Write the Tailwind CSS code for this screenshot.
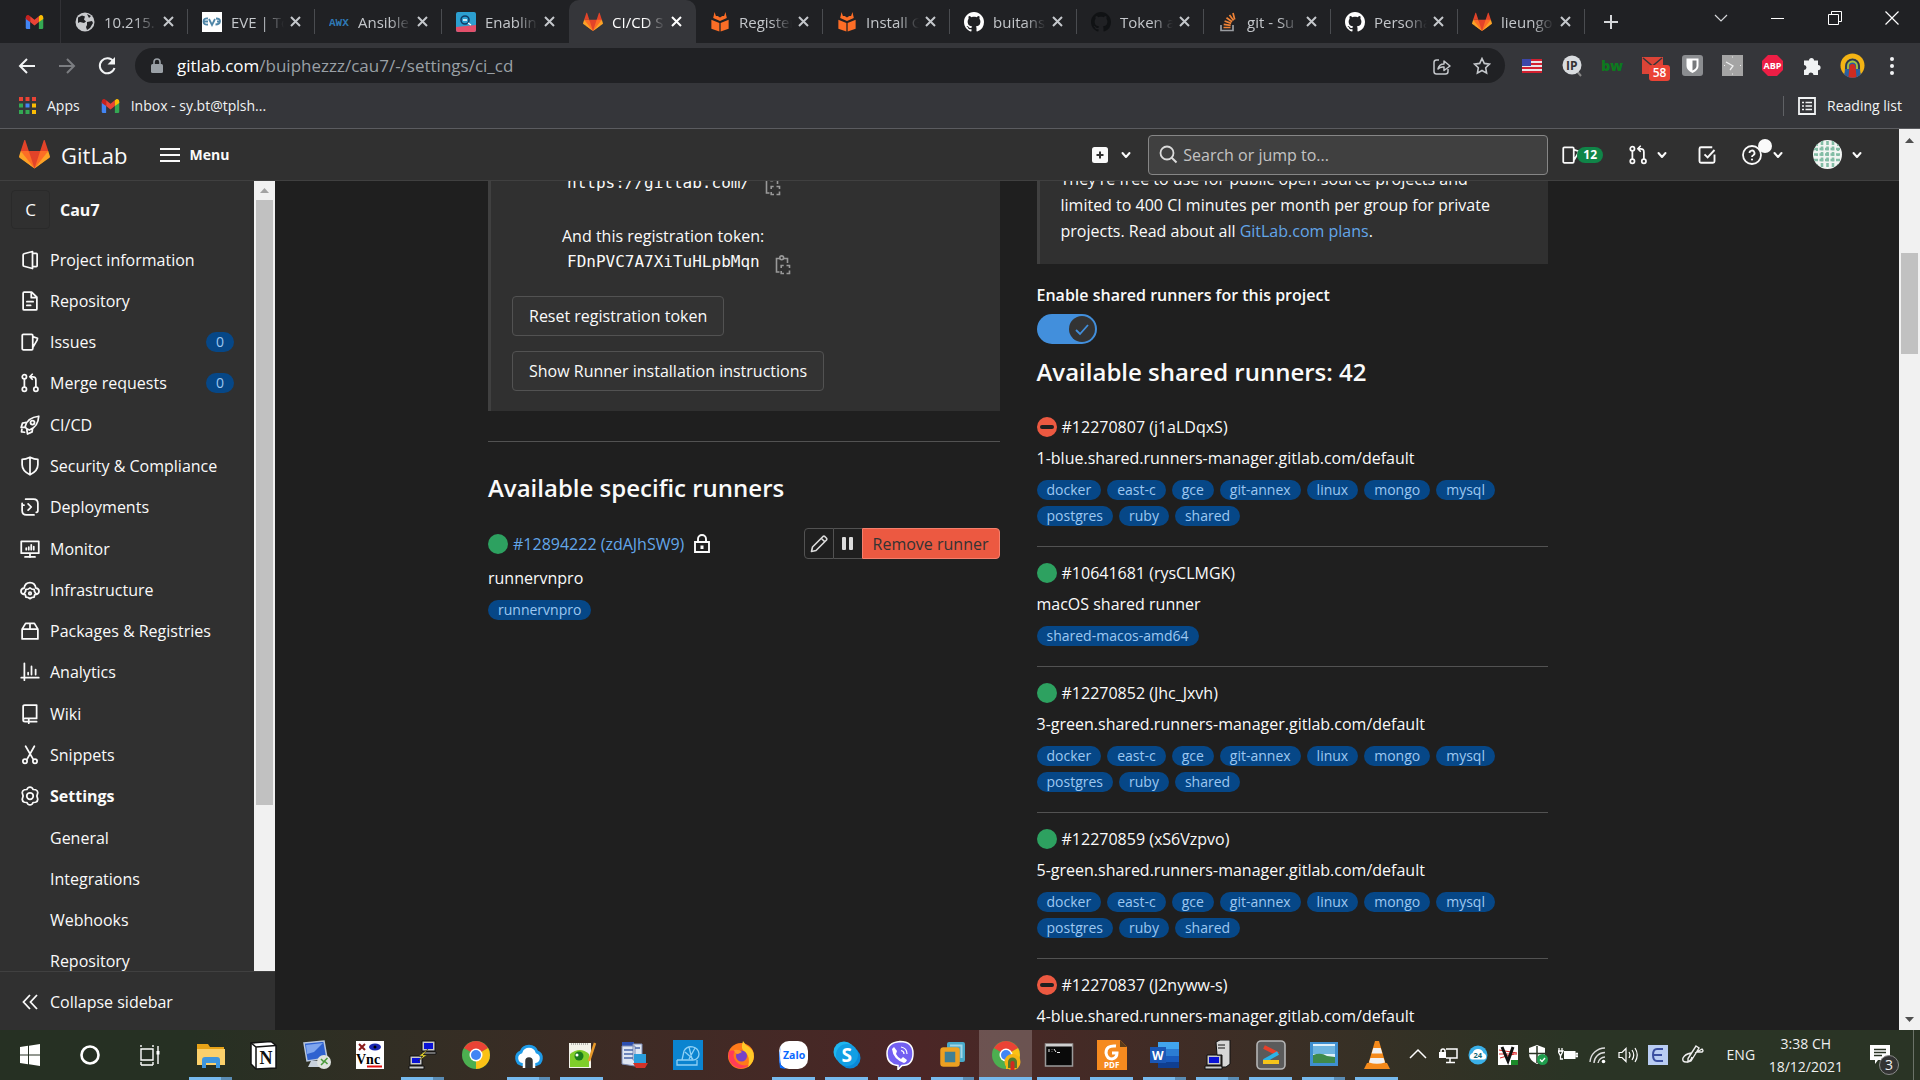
<!DOCTYPE html>
<html lang="en">
<head>
<meta charset="utf-8">
<title>CI/CD Settings · Cau7 · GitLab</title>
<script src="https://cdn.jsdelivr.net/npm/@tailwindcss/browser@4"></script>
</head>
<body class="flex h-screen flex-col overflow-hidden bg-[#1f1f1f] font-['Open_Sans','Noto_Sans',sans-serif] text-[16px] leading-[26px] text-[#fafafa]">

<svg class="hidden" aria-hidden="true">
  <symbol id="tanuki" viewBox="0 0 36 36"><path fill="#e24329" d="M2 14l9.38 9v-9l-4-12.28c-.205-.632-1.176-.632-1.38 0zM34 14l-9.38 9v-9l4-12.28c.205-.632 1.176-.632 1.38 0zM18 34.38L3 14h30z"/><path fill="#fc6d26" d="M18 34.38L11.38 14H2l4 11zM18 34.38L24.62 14H34l-4 11z"/><path fill="#fca326" d="M2 14L.1 20.16c-.18.565 0 1.2.5 1.56L18 34.38zM34 14l1.9 6.16c.18.565 0 1.2-.5 1.56L18 34.38z"/></symbol>
  <symbol id="github" viewBox="0 0 16 16"><path fill="currentColor" d="M8 0C3.58 0 0 3.58 0 8c0 3.54 2.29 6.53 5.47 7.59.4.07.55-.17.55-.38 0-.19-.01-.82-.01-1.49-2.01.37-2.53-.49-2.69-.94-.09-.23-.48-.94-.82-1.13-.28-.15-.68-.52-.01-.53.63-.01 1.08.58 1.23.82.72 1.21 1.87.87 2.33.66.07-.52.28-.87.51-1.07-1.78-.2-3.64-.89-3.64-3.95 0-.87.31-1.59.82-2.15-.08-.2-.36-1.02.08-2.12 0 0 .67-.21 2.2.82.64-.18 1.32-.27 2-.27s1.36.09 2 .27c1.53-1.04 2.2-.82 2.2-.82.44 1.1.16 1.92.08 2.12.51.56.82 1.27.82 2.15 0 3.07-1.87 3.75-3.65 3.95.29.25.54.73.54 1.48 0 1.07-.01 1.93-.01 2.2 0 .21.15.46.55.38A8.01 8.01 0 0 0 16 8c0-4.42-3.58-8-8-8z"/></symbol>
  <symbol id="gmail" viewBox="0 0 20 16"><path fill="#4285f4" d="M0 3v11.500Q0 16 1.500 16H5V7z"/><path fill="#34a853" d="M20 3v11.500Q20 16 18.500 16H15V7z"/><path fill="#ea4335" d="M5 1.500V8l5 4 5-4V1.500L10 5.500z"/><path fill="#c5221f" d="M0 3v1.500L5 8V1.500L3.500.4C2-.6 0 .6 0 3z"/><path fill="#fbbc04" d="M20 3v1.500L15 8V1.500l1.500-1.100C18-.6 20 .6 20 3z"/></symbol>
  <symbol id="docs" viewBox="0 0 20 22"><path fill="#fc6d26" d="M4 0l1.500 4.500h2L10 6l2.500-1.500h2L16 0l1.500 6.500L10 10 2.500 6.500zM.500 8.500L9.300 12v9.500L.500 18.500zM19.500 8.500L10.700 12v9.500l8.800-3z"/></symbol>
  <symbol id="globe" viewBox="0 0 20 20"><circle cx="10" cy="10" r="9.500" fill="#c8cacd"/><path fill="#202124" d="M3 5.500l4-2 3 1-1 3 2 2-2 1.500-4-1-2 1zM12 10l5-1 1 2-3 5-3 2-1-3 1-2zM12 2l4 2-2 2z"/></symbol>
  <symbol id="eve" viewBox="0 0 20 20"><path fill="#fff" d="M0 0h20v20H0z"/><path d="M6 6.500Q1.500 6 1.500 9.500T6 12.500M2 9.500h4M7 7l3 6 3-6M14 6.500q4.500 0 4 3t-4.500 3M15 9.500h3" fill="none" stroke="#4f86a8" stroke-width="1.800"/></symbol>
  <symbol id="awx" viewBox="0 0 20 20"><text x="0" y="14" font-family="Liberation Mono" font-weight="bold" font-size="11" fill="#2f79b5">AWX</text></symbol>
  <symbol id="enabling" viewBox="0 0 20 20"><rect width="20" height="20" rx="2" fill="#2c9fd0"/><path fill="#e2506b" d="M0 15l20-2v5q0 2-2 2H2q-2 0-2-2z"/><circle cx="9" cy="8" r="4" fill="none" stroke="#103c66" stroke-width="1.600"/><path d="M7 8h4M12 11l3 2" stroke="#fff" stroke-width="1.400"/></symbol>
  <symbol id="stack" viewBox="0 0 20 20"><path d="M3 13v5.500h12V13" fill="none" stroke="#9a9da1" stroke-width="1.700"/><path d="M5.500 15.500h7M5.700 12.300l7 1M6.600 9l6.600 2.400M8.500 5.800l5.600 4M11.500 3l4 5.500M15 1l1.700 6.500" stroke="#ef8236" stroke-width="1.700"/></symbol>
  <symbol id="chev" viewBox="0 0 12 12"><path d="M2.500 4l3.500 4 3.500-4" fill="none" stroke="currentColor" stroke-width="2" stroke-linecap="round" stroke-linejoin="round"/></symbol>
  <symbol id="issues" viewBox="0 0 16 16"><path d="M2.700 1.800h6.600q.9 0 .9.900v10.600q0 .9-.9.900H2.700q-.9 0-.9-.900V2.700q0-.900.900-.900zM10.200 3.700l3.800 1.300-.3 1.500-3.500 6" fill="none" stroke="currentColor" stroke-width="1.400" stroke-linejoin="round"/></symbol>
  <symbol id="merge" viewBox="0 0 16 16"><g fill="none" stroke="currentColor" stroke-width="1.400" stroke-linecap="round" stroke-linejoin="round"><circle cx="3.500" cy="3" r="1.700"/><circle cx="3.500" cy="13" r="1.700"/><circle cx="12.700" cy="13" r="1.700"/><path d="M3.500 5v6M12.700 11V5.500q0-2.500-2.500-2.500H8M9.800 1L7.800 3l2 2"/></g></symbol>
  <symbol id="copy" viewBox="0 0 16 20"><g fill="none" stroke="currentColor" stroke-width="1.600"><path d="M4.500 17H1.500V3.500H5M8.500 3.500H12.500V8"/><circle cx="6.700" cy="2.800" r="1.900"/><path d="M6.200 13v-2.500h2.500M11.500 10.500H14.500V13M14.500 15.500v3h-3M9 18.500H6.200V16"/></g></symbol>
</svg>

<!-- Browser chrome -->
<header class="shrink-0 bg-[#35363a] text-[15px]">
  <div class="flex h-[43px] bg-[#202124] text-[#c4c7cb]">
    <div class="flex w-[61px] items-center justify-end border-r border-[#4a4c50]/40 pr-[16px]"><svg class="h-[14px] w-[19px]" role="img" aria-label="Gmail"><use href="#gmail"/></svg></div>
    <div id="tabs" class="flex"></div>
    <button class="ml-[18px] w-[24px]" aria-label="New tab"><svg class="h-[16px] w-[16px]" viewBox="0 0 16 16"><path d="M8 1v14M1 8h14" stroke="#d5d7da" stroke-width="2"/></svg></button>
    <div class="ml-auto flex pb-[7px]">
      <button class="flex w-[57px] items-center justify-center" aria-label="Search tabs"><svg class="h-[14px] w-[14px]" viewBox="0 0 14 14"><path d="M1 4l6 6 6-6" fill="none" stroke="#d5d7da" stroke-width="1.200"/></svg></button>
      <button class="flex w-[57px] items-center justify-center" aria-label="Minimize"><span class="h-px w-[13px] bg-white"></span></button>
      <button class="flex w-[57px] items-center justify-center" aria-label="Restore"><svg class="h-[14px] w-[14px]" viewBox="0 0 14 14"><path d="M.5 3.500h10v10H.5zM3.500 3V.5h10v10H11" fill="none" stroke="#fff"/></svg></button>
      <button class="flex w-[57px] items-center justify-center" aria-label="Close"><svg class="h-[14px] w-[14px]" viewBox="0 0 14 14"><path d="M.5.5l13 13M13.500.5l-13 13" stroke="#fff" stroke-width="1.200"/></svg></button>
    </div>
  </div>
  <div class="flex h-[45px] items-center pr-[8px]">
    <button class="ml-[17px] mr-[20px]" aria-label="Back"><svg class="h-[20px] w-[20px]" viewBox="0 0 20 20"><path d="M18 10H3M10 3l-7 7 7 7" fill="none" stroke="#f1f3f4" stroke-width="2"/></svg></button>
    <button class="mr-[20px]" aria-label="Forward"><svg class="h-[20px] w-[20px]" viewBox="0 0 20 20"><path d="M2 10h15M10 3l7 7-7 7" fill="none" stroke="#7b7d81" stroke-width="2"/></svg></button>
    <button class="mr-[18px]" aria-label="Reload"><svg class="h-[20px] w-[20px]" viewBox="0 0 20 20"><path d="M16.500 5.500A7.500 7.500 0 1 0 17.500 12" fill="none" stroke="#f1f3f4" stroke-width="2"/><path d="M18 1v7.500h-7.500z" fill="#f1f3f4"/></svg></button>
    <div class="flex h-[35px] grow items-center gap-[14px] rounded-full bg-[#202124] pr-[12px] pl-[16px]">
      <svg class="h-[16px] w-[12px] shrink-0" viewBox="0 0 12 16"><rect y="6" width="12" height="9" rx="1.500" fill="#9aa0a6"/><path d="M3 7V4a3 3 0 0 1 6 0v3" fill="none" stroke="#9aa0a6" stroke-width="1.600"/></svg>
      <a href="#" class="grow text-[17px] text-[#9aa0a6]"><span class="text-white">gitlab.com</span>/buiphezzz/cau7/-/settings/ci_cd</a>
      <button class="w-[20px]" aria-label="Share"><svg class="h-[18px] w-[18px]" viewBox="0 0 18 18"><path d="M6 3H3.500Q1 3 1 5.500v9Q1 17 3.500 17h9q2.500 0 2.500-2.500V12M5 12q1-5 6-5V4l6 5-6 4.500V10q-4-.5-6 2z" fill="none" stroke="#c4c7cb" stroke-width="1.500" stroke-linejoin="round"/></svg></button>
      <button class="ml-[6px] w-[20px]" aria-label="Bookmark this page"><svg class="h-[18px] w-[18px]" viewBox="0 0 18 18"><path d="M9 1.500l2.300 4.900 5.200.7-3.800 3.700.9 5.300L9 13.500l-4.600 2.600.9-5.300L1.500 7.100l5.200-.7z" fill="none" stroke="#c4c7cb" stroke-width="1.600"/></svg></button>
    </div>
    <div class="ml-[7px] flex">
      <button class="flex w-[40px] items-center justify-center" aria-label="Flag"><svg class="h-[14px] w-[20px]" viewBox="0 0 20 14"><path fill="#e9e3e6" d="M0 0h20v14H0z"/><path d="M0 1h20M0 5h20M0 9h20M0 13h20" stroke="#d3202f" stroke-width="2"/><path fill="#3c46a8" d="M0 0h9v7H0z"/></svg></button>
      <button class="flex w-[40px] items-center justify-center" aria-label="IP"><svg class="h-[22px] w-[22px]" viewBox="0 0 22 22"><path d="M15 15l5 6" stroke="#888" stroke-width="2"/><circle cx="11" cy="10" r="9.500" fill="#d9dcdf"/><text x="5" y="14.500" font-family="Open Sans" font-size="12" font-weight="bold" fill="#333">IP</text></svg></button>
      <button class="flex w-[40px] items-center justify-center text-[14px] font-extrabold text-[#0c7a1e]">bw</button>
      <button class="relative flex w-[40px] items-center justify-center" aria-label="Mail"><svg class="h-[17px] w-[21px]" viewBox="0 0 21 17"><path fill="#dc4437" d="M0 0h21v17H0z"/><path d="M1 1l9.500 8L20 1" fill="none" stroke="#35363a" stroke-width="1.500"/></svg><span class="absolute top-[12px] left-[17px] h-[16px] w-[21px] rounded-[3px] bg-[#ea4335] text-[12px] leading-[16px] font-semibold text-white">58</span></button>
      <button class="flex w-[40px] items-center justify-center" aria-label="Bitwarden"><svg class="h-[21px] w-[21px]" viewBox="0 0 21 21"><rect width="21" height="21" rx="3" fill="#8b8d90"/><path d="M4.500 3.500h12V11q0 4-6 7-6-3-6-7z" fill="#fff"/><path d="M10.500 5.500H14.500V11q0 2.500-4 4.500z" fill="#77797c"/></svg></button>
      <button class="flex w-[40px] items-center justify-center" aria-label="Clock"><svg class="h-[21px] w-[21px]" viewBox="0 0 21 21"><path fill="#a4a4a4" d="M0 0h21v21H0z"/><path d="M4 7l7 4-3 4" fill="none" stroke="#eee" stroke-width="1.300"/><path d="M10 2h1M10 19h1M2 10.500h1M18 10.500h1" stroke="#eee"/></svg></button>
      <button class="flex w-[40px] items-center justify-center" aria-label="Adblock Plus"><svg class="h-[21px] w-[21px]" viewBox="0 0 21 21"><path fill="#ed1e45" d="M6 0h9l6 6v9l-6 6H6l-6-6V6z"/><text x="1.500" y="14" font-family="Open Sans" font-size="9" font-weight="bold" fill="#fff">ABP</text></svg></button>
      <button class="flex w-[40px] items-center justify-center" aria-label="Extensions"><svg class="h-[20px] w-[20px]" viewBox="0 0 20 20"><path fill="#f1f3f4" d="M2 4.500h5a2.500 2.500 0 0 1 5 0h4v4.500a2.600 2.600 0 0 1 0 5.200V19h-4.500a2.500 2.500 0 0 0-5 0H2v-5a2.500 2.500 0 0 0 0-5z"/></svg></button>
      <button class="flex w-[40px] items-center justify-center" aria-label="Profile"><svg class="h-[25px] w-[25px]" viewBox="0 0 25 25"><circle cx="12.500" cy="12.500" r="12" fill="#f4b414"/><path d="M4 21q1-1 1-8a7.500 7.500 0 0 1 15 0q0 7 1 8-3.500 4-8.500 4T4 21z" fill="#2b5f9e"/><path d="M6 16v-3a6.500 6.500 0 0 1 13 0v3" fill="none" stroke="#35363a" stroke-width="1.500"/><path d="M8 16v-3a4.500 4.500 0 0 1 9 0v3" fill="none" stroke="#a9c23a" stroke-width="1.800"/><path d="M8.500 24l1-10a3 3 0 0 1 6 0l1 10q-4 1.500-8 0z" fill="#d02b20"/></svg></button>
      <button class="flex w-[40px] items-center justify-center" aria-label="Menu"><svg class="h-[18px] w-[4px]" viewBox="0 0 4 18" fill="#f1f3f4"><circle cx="2" cy="2" r="2"/><circle cx="2" cy="9" r="2"/><circle cx="2" cy="16" r="2"/></svg></button>
    </div>
  </div>
  <nav class="flex h-[41px] items-center border-b border-[#5b5c60] pr-[18px] pb-[5px] pl-[19px] text-[14px] text-[#f1f3f4]" aria-label="Bookmarks">
    <a href="#" class="flex items-center gap-[11px]"><svg class="h-[17px] w-[17px]" viewBox="0 0 17 17"><path fill="#ea4335" d="M0 0h4v4H0zM6.500 0h4v4h-4zM13 0h4v4h-4z"/><path fill="#34a853" d="M0 6.500h4v4H0zM0 13h4v4H0zM6.500 13h4v4h-4z"/><path fill="#4285f4" d="M6.500 6.500h4v4h-4z"/><path fill="#fbbc04" d="M13 6.500h4v4h-4zM13 13h4v4h-4z"/></svg>Apps</a>
    <a href="#" class="ml-[21px] flex items-center gap-[11px]"><svg class="h-[14px] w-[19px]"><use href="#gmail"/></svg>Inbox - sy.bt@tplsh...</a>
    <button class="ml-auto flex items-center gap-[11px] border-l border-[#5f6165] pl-[14px] leading-[20px]"><svg class="h-[18px] w-[18px]" viewBox="0 0 18 18"><path fill="none" stroke="#f1f3f4" stroke-width="1.800" d="M1 1h16v16H1z"/><path d="M4 5.500h2M4 9h2M4 12.500h2M7.500 5.500H14M7.500 9H14M7.500 12.500H14" stroke="#f1f3f4" stroke-width="1.600"/></svg>Reading list</button>
  </nav>
</header>

<!-- Page -->
<div class="flex min-h-0 grow">
<div class="flex min-w-0 grow flex-col">
  <header class="flex h-[52px] shrink-0 items-center border-b border-[#404040] bg-[#303030] pr-[36px] pl-[19px]">
    <a href="#" class="flex items-center gap-[11px] text-[22px]"><svg class="h-[31px] w-[31px]"><use href="#tanuki"/></svg>GitLab</a>
    <button class="ml-[32px] flex items-center gap-[10px] text-[14px] font-bold"><svg class="h-[14px] w-[20px]" viewBox="0 0 20 14"><path d="M0 1h20M0 7h20M0 13h20" stroke="#fafafa" stroke-width="2"/></svg>Menu</button>
    <div class="ml-auto flex items-center">
      <button class="mr-[16px] flex items-center gap-[12px]" aria-label="Create new"><svg class="h-[16px] w-[16px]" viewBox="0 0 16 16"><rect width="16" height="16" rx="2.500" fill="#fafafa"/><path d="M8 4.500v7M4.500 8h7" stroke="#303030" stroke-width="2"/></svg><svg class="h-[12px] w-[12px]"><use href="#chev"/></svg></button>
      <label class="flex h-[40px] w-[400px] items-center gap-[5px] rounded-[4px] border border-[#868686] bg-[#404040] pl-[10px]"><svg class="h-[19px] w-[19px]" viewBox="0 0 19 19"><circle cx="8" cy="8" r="6.500" fill="none" stroke="#dbdbdb" stroke-width="1.800"/><path d="M12.500 12.500l5 5" stroke="#dbdbdb" stroke-width="2"/></svg><input type="text" aria-label="Search" placeholder="Search or jump to..." class="min-w-0 grow bg-transparent text-[16px] outline-none placeholder:text-[#c4c4c4]"></label>
      <a href="#" class="ml-[13px] flex items-center" aria-label="Issues"><svg class="h-[20px] w-[20px]"><use href="#issues"/></svg><span class="-ml-[4px] h-[16px] rounded-full bg-[#108548] px-[6px] text-[12px] leading-[16px] font-bold text-white">12</span></a>
      <button class="ml-[25px] flex items-center gap-[8px]" aria-label="Merge requests"><svg class="h-[20px] w-[20px]"><use href="#merge"/></svg><svg class="h-[12px] w-[12px]"><use href="#chev"/></svg></button>
      <a href="#" class="ml-[29px]" aria-label="To-Do List"><svg class="h-[20px] w-[20px]" viewBox="0 0 16 16"><path d="M14 7.500V13q0 1.200-1.200 1.200H3.200Q2 14.200 2 13V3q0-1.200 1.200-1.200h9M6 7.500L8.500 10l5.500-6" fill="none" stroke="currentColor" stroke-width="1.500"/></svg></a>
      <button class="relative ml-[25px] flex items-center gap-[10px]" aria-label="Help"><svg class="h-[20px] w-[20px]" viewBox="0 0 20 20"><circle cx="10" cy="10" r="9" fill="none" stroke="currentColor" stroke-width="1.800"/><path d="M7.500 8a2.500 2.500 0 1 1 3.700 2.200Q10 10.800 10 12" fill="none" stroke="currentColor" stroke-width="1.800"/><circle cx="10" cy="14.500" r="1.100" fill="currentColor"/></svg><svg class="h-[12px] w-[12px]"><use href="#chev"/></svg><span class="absolute -top-[6px] left-[16px] h-[14px] w-[14px] rounded-full bg-[#fafafa]"></span></button>
      <button class="ml-[29px] flex items-center gap-[9px]" aria-label="User menu"><svg class="h-[29px] w-[29px] rounded-full" viewBox="0 0 29 29"><path fill="#f2f5f3" d="M0 0h29v29H0z"/><path d="M9 1v27M14.500 1v27M20 1v27M1 9h27M1 14.500h27M1 20h27" stroke="#83bda6" stroke-width="2.600" stroke-dasharray="4 1.500"/><path d="M4 4v21M25 4v21" stroke="#83bda6" stroke-width="2" stroke-dasharray="2 3"/></svg><svg class="h-[12px] w-[12px]"><use href="#chev"/></svg></button>
    </div>
  </header>

  <div class="flex min-h-0 grow">
    <aside class="flex w-[275px] shrink-0 flex-col bg-[#303030]">
      <div class="flex min-h-0 grow overflow-hidden">
        <nav class="min-w-0 grow" aria-label="Project">
          <a href="#" class="mt-[9px] ml-[11px] flex h-[39px] items-center gap-[10px] font-bold"><span class="flex h-[39px] w-[39px] items-center justify-center rounded-[4px] border border-[#2a2a2a] text-[17px] font-normal">C</span>Cau7</a>
          <ul id="side" class="mt-[10px] grid h-[743px] auto-rows-fr"></ul>
        </nav>
        <div class="flex w-[21px] flex-col items-center bg-[#f1f1f1]" aria-hidden="true"><svg class="my-[7px] h-[5px] w-[9px] shrink-0" viewBox="0 0 9 5"><path fill="#a3a3a3" d="M0 5L4.500 0 9 5z"/></svg><div class="h-[605px] w-[17px] shrink-0 bg-[#c1c1c1]"></div></div>
      </div>
      <button class="flex h-[59px] shrink-0 items-center gap-[10px] border-t border-[#404040] pt-px pl-[20px]"><svg class="h-[20px] w-[20px]" viewBox="0 0 20 20"><path d="M10 3L3.500 10l6.500 7M17 3l-6.500 7 6.500 7" fill="none" stroke="currentColor" stroke-width="1.800"/></svg>Collapse sidebar</button>
    </aside>

    <main class="min-w-0 grow overflow-hidden pl-[213px]">
      <div class="grid w-full max-w-[1060px] grid-cols-2 gap-[37px]">
        <section class="-mt-[11px]">
          <div class="border-l-[3px] border-[#404040] bg-[#303030] pb-[20px] pl-[21px]">
            <div class="pl-[50px]">
              <div class="flex h-[26px] items-center gap-[15px] pl-[5px]"><code class="font-['DejaVu_Sans_Mono',monospace] text-[16px]">https://gitlab.com/</code><button class="text-[#999]" aria-label="Copy URL"><svg class="mt-[6px] h-[20px] w-[16px]"><use href="#copy"/></svg></button></div>
              <p class="mt-[27px]">And this registration token:</p>
              <div class="flex h-[26px] items-center gap-[15px] pl-[5px]"><code class="font-['DejaVu_Sans_Mono',monospace] text-[16px]">FDnPVC7A7XiTuHLpbMqn</code><button class="text-[#999]" aria-label="Copy token"><svg class="mt-[6px] h-[20px] w-[16px]"><use href="#copy"/></svg></button></div>
            </div>
            <button class="mt-[21px] block h-[40px] rounded-[4px] border border-[#525252] bg-[#333] px-[16px]">Reset registration token</button>
            <button class="mt-[15px] block h-[40px] rounded-[4px] border border-[#525252] bg-[#333] px-[16px]">Show Runner installation instructions</button>
          </div>
          <hr class="mt-[30px] border-[#525252]">
          <h4 class="mt-[31px] text-[24px] leading-[30px] font-semibold">Available specific runners</h4>
          <div class="mt-[25px] flex h-[31px] items-center">
            <span class="h-[20px] w-[20px] rounded-full bg-[#2da160]"></span>
            <a href="#" class="ml-[5px] text-[#63a6e9]">#12894222 (zdAJhSW9)</a>
            <svg class="ml-[10px] h-[19px] w-[16px]" viewBox="0 0 16 19"><path d="M1 8h14v10H1zM4 8V5a4 4 0 0 1 8 0v3" fill="none" stroke="currentColor" stroke-width="1.900"/><path fill="currentColor" d="M6.500 11.500h3v3.500h-3z"/></svg>
            <div class="ml-auto flex h-[31px]">
              <button class="flex w-[30px] items-center justify-center rounded-l-[4px] border border-[#525252]" aria-label="Edit"><svg class="h-[18px] w-[18px]" viewBox="0 0 18 18"><path d="M1.500 16.500l1-4.500L13 1.500q1-.7 2 .2l1.300 1.300q.9 1 .2 2L6 15.500zM11.500 3.500l3 3" fill="none" stroke="#dbdbdb" stroke-width="1.600" stroke-linejoin="round"/></svg></button>
              <button class="flex w-[28px] items-center justify-center gap-[3px] border-y border-[#525252]" aria-label="Pause"><span class="h-[13px] w-[4px] rounded-[1px] bg-[#dbdbdb]"></span><span class="h-[13px] w-[4px] rounded-[1px] bg-[#dbdbdb]"></span></button>
              <button class="rounded-r-[4px] border border-[#f57f6c] bg-[#ec5941] px-[10px] text-[#333]">Remove runner</button>
            </div>
          </div>
          <p class="mt-[6px]">runnervnpro</p>
          <span class="mt-[9px] inline-block h-[20px] rounded-full bg-[#064787] px-[10px] text-[14px] leading-[20px] text-[#9dc7f1]">runnervnpro</span>
        </section>

        <section class="-mt-[15px]">
          <div class="border-l-[3px] border-[#404040] bg-[#303030] pr-[20px] pb-[20px] pl-[21px]">They're free to use for public open source projects and<br>limited to 400 CI minutes per month per group for private<br>projects. Read about all <a href="#" class="text-[#63a6e9]">GitLab.com plans</a>.</div>
          <label for="shared" class="mt-[18px] block text-[16px] font-semibold">Enable shared runners for this project</label>
          <div class="relative mt-[6px] h-[30px] w-[60px]"><input id="shared" type="checkbox" checked class="block h-[30px] w-[60px] appearance-none rounded-full bg-[#428fdc]"><svg class="pointer-events-none absolute top-[2px] right-[2px] h-[26px] w-[26px]" viewBox="0 0 26 26"><circle cx="13" cy="13" r="13" fill="#333"/><path d="M7 14l4 4 8-9" fill="none" stroke="#428fdc" stroke-width="1.800"/></svg></div>
          <h4 class="mt-[13px] mb-[13px] text-[24px] leading-[30px] font-semibold">Available shared runners: 42</h4>
          <ul id="runners"></ul>
        </section>
      </div>
    </main>
  </div>
</div>
<div class="flex w-[21px] shrink-0 flex-col items-center bg-[#f1f1f1]" aria-hidden="true">
  <svg class="mt-[9px] h-[5px] w-[9px]" viewBox="0 0 9 5"><path fill="#505050" d="M0 5L4.500 0 9 5z"/></svg>
  <div class="mt-[110px] h-[101px] w-[17px] bg-[#c1c1c1]"></div>
  <svg class="mt-auto mb-[8px] h-[5px] w-[9px]" viewBox="0 0 9 5"><path fill="#505050" d="M0 0l4.500 5L9 0z"/></svg>
</div>
</div>

<!-- Taskbar -->
<footer class="flex h-[50px] shrink-0 bg-linear-to-r from-[#263023] from-10% via-[#4b2626] via-48% to-[#2a3425] to-82% text-[14px] text-[#f0f0f0]">
  <div id="start" class="flex"></div>
  <div id="apps" class="ml-[4px] flex"></div>
  <div id="tray" class="ml-auto flex items-center"></div>
  <button class="w-[57px]">ENG</button>
  <button class="w-[76px] text-center leading-[23px] whitespace-nowrap">3:38 CH<br>18/12/2021</button>
  <button class="relative mr-[6px] ml-[27px] w-[45px] border-r border-[#6b7268]" aria-label="3 notifications"><svg class="h-[20px] w-[20px]" viewBox="0 0 20 20"><path fill="#fff" d="M0 0h20v15H8l-3 4v-4H0z"/><path d="M4 4.500h12M4 7.500h12M4 10.500h8" stroke="#2a3425" stroke-width="1.500"/></svg><span class="absolute top-[25px] left-[9px] h-[20px] w-[20px] rounded-full border border-[#8a8a8a] bg-[#333] text-[14px] leading-[18px]">3</span></button>
</footer>

<script>
const use = (id, cls) => `<svg class="${cls}"><use href="#${id}"/></svg>`;

/* Browser tabs: icon, title, icon colour, active */
const tabs = [
  ['globe', '10.215.'], ['eve', 'EVE | To'], ['awx', 'Ansible'], ['enabling', 'Enabling'],
  ['tanuki', 'CI/CD S', '', true], ['docs', 'Register'], ['docs', 'Install G'],
  ['github', 'buitans'], ['github', 'Token a', 'text-[#101214]'],
  ['stack', 'git - Su'], ['github', 'Persona'], ['tanuki', 'lieungo']
];
document.getElementById('tabs').innerHTML = tabs.map(([icon, title, color = 'text-white', active], i) => {
  const beforeActive = tabs[i + 1] && tabs[i + 1][3];
  return `<div class="flex w-[127px] items-center pl-[14px] ${active ? 'rounded-t-[10px] bg-[#35363a] text-white' : ''}">
    ${use(icon, 'h-[20px] w-[20px] shrink-0 ' + color)}
    <span class="ml-[9px] w-[53px] overflow-hidden whitespace-nowrap mask-r-from-60% mask-r-to-100%">${title}</span>
    <button class="ml-[4px] flex w-[14px] justify-center" aria-label="Close tab"><svg class="h-[11px] w-[11px]" viewBox="0 0 11 11"><path d="M1 1l9 9M10 1l-9 9" stroke="currentColor" stroke-width="2"/></svg></button>
    <span class="ml-auto h-[25px] w-px ${active || beforeActive ? '' : 'bg-[#4a4c50]'}"></span>
  </div>`;
}).join('');

/* Project navigation */
const st = d => `<g fill="none" stroke="currentColor" stroke-width="1.400" stroke-linecap="round" stroke-linejoin="round">${d}</g>`;
const nav = [
  ['Project information', st('<path d="M10 1.200L3.200 3q-.700.200-.700.900v8.200q0 .7.700.9L10 14.800zM10.500 2.700h2.500q.7 0 .7.700v9.200q0 .7-.7.700h-2.500"/>')],
  ['Repository', st('<path d="M3.300.9h6L13.500 5v9.300q0 .8-.8.800H3.300q-.8 0-.8-.8V1.700q0-.8.800-.8zM9 1.200V5.300h4.200M5.500 8.500h5M5.500 11.500h3"/>')],
  ['Issues', '<use href="#issues"/>', 0],
  ['Merge requests', '<use href="#merge"/>', 0],
  ['CI/CD', st('<path d="M5 10.800L4.200 9Q6 2 15 1q-.5 8.500-7.500 11zM4.500 6L2 6.500.9 10l3.300-.3M10 11.300l-.3 2.200L6 15.200 5.500 12M1.500 11.500l-.3 2 2.500.3"/><circle cx="10" cy="6" r="1.600"/>')],
  ['Security &amp; Compliance', st('<path d="M8 1q3.500 1.700 6.300 1.700V7q0 5-6.300 8-6.300-3-6.300-8V2.700Q4.500 2.700 8 1zM8 1v14"/>')],
  ['Deployments', st('<path d="M4.500 1.700h6.300q3.500 0 3.500 3.500v5.600q0 1.500-1.300 1.500M1.700 5v5.800q0 3.500 3.500 3.500h6M1.700 6.500h1.500M6.500 5.500L9 8l-2.500 2.500"/>')],
  ['Monitor', st('<path d="M1 1.800h14v9.500H1zM8 11.500v3M4 14.300h8M5 8.500V7.300M7 8.500v-2M9 8.500V4.600M11 8.500V6"/>')],
  ['Infrastructure', st('<path d="M3 11.500Q.8 11 .8 9q0-2.300 2.500-2.500Q4 2 8 2t4.700 4.500Q15.200 6.700 15.200 9q0 2-2.200 2.500M8 6.300l1.500 1 1.800.1.300 1.800 1 1.500-1 1.500-.3 1.500-1.800.3-1.500.9-1.500-.9-1.800-.3-.3-1.500-1-1.500 1-1.500.3-1.800 1.800-.1z"/><circle cx="8" cy="10.700" r="1"/>')],
  ['Packages &amp; Registries', st('<path d="M1.700 6.500L4.500 1.900h7l2.800 4.600v7.800H1.700zM1.700 6.500h12.600M8 2v4.500"/>')],
  ['Analytics', st('<path d="M3.500 1v13.500M1 12.500h14M6.500 10V8.500M9.200 10V3.500M12.500 10V6"/>')],
  ['Wiki', st('<path d="M2.500 12.500V2q0-1.200 1.200-1.200h9.600v10.700H4q-1.500 0-1.500 1.300t1.500 1.300h9.300M7 11.500v3.800"/>')],
  ['Snippets', st('<path d="M4.500 1l6 10.300M11.500 1L5.700 11.300"/><circle cx="4" cy="13" r="1.700"/><circle cx="12" cy="13" r="1.700"/>')],
  ['Settings', st('<path d="M6.300 1.500Q8 .3 9.700 1.500l.8 1.300 2 .2q1.800.6 1.700 2.500l-.7 2.500.7 2.500q.1 1.900-1.700 2.500l-2 .2-.8 1.300q-1.700 1.200-3.400 0l-.8-1.300-2-.2Q1.700 12.400 1.800 10.500L2.500 8l-.7-2.500Q1.700 3.600 3.500 3l2-.2z"/><circle cx="8" cy="8" r="2.600"/>')],
  ['General'], ['Integrations'], ['Webhooks'], ['Repository']
];
document.getElementById('side').innerHTML = nav.map(([label, icon, count]) =>
  `<li class="flex items-center"><a href="#" class="flex grow items-center gap-[10px] pr-[20px] pl-[20px] whitespace-nowrap ${label === 'Settings' ? 'font-bold' : ''}">
    ${icon ? `<svg class="h-[20px] w-[20px] shrink-0" viewBox="0 0 16 16">${icon}</svg>` : '<span class="w-[20px]"></span>'}
    <span>${label}</span>${count === undefined ? '' : `<span class="ml-auto h-[20px] w-[28px] rounded-full bg-[#064787] text-center text-[14px] leading-[20px] text-[#9dc7f1]">${count}</span>`}</a></li>`
).join('');

/* Shared runners */
const tags = ['docker', 'east-c', 'gce', 'git-annex', 'linux', 'mongo', 'mysql', 'postgres', 'ruby', 'shared'];
const runners = [
  [false, '#12270807 (j1aLDqxS)', '1-blue.shared.runners-manager.gitlab.com/default', tags],
  [true, '#10641681 (rysCLMGK)', 'macOS shared runner', ['shared-macos-amd64']],
  [true, '#12270852 (Jhc_Jxvh)', '3-green.shared.runners-manager.gitlab.com/default', tags],
  [true, '#12270859 (xS6Vzpvo)', '5-green.shared.runners-manager.gitlab.com/default', tags],
  [false, '#12270837 (J2nyww-s)', '4-blue.shared.runners-manager.gitlab.com/default', tags]
];
document.getElementById('runners').innerHTML = runners.map(([on, id, name, list], i) =>
  `<li class="border-t pt-[11px] pb-[20px] ${i ? 'border-[#525252]' : 'border-transparent'}">
    <div class="flex h-[30px] items-center gap-[5px]"><span class="flex h-[20px] w-[20px] items-center justify-center rounded-full ${on ? 'bg-[#2da160]' : 'bg-[#ec5941]'}">${on ? '' : '<span class="h-[4px] w-[14px] rounded-full bg-[#1f1f1f]"></span>'}</span>${id}</div>
    <div class="h-[32px] leading-[32px]">${name}</div>
    <div class="mt-[6px] flex flex-wrap gap-[6px] pr-[40px]">${list.map(t => `<span class="h-[20px] rounded-full bg-[#064787] px-[10px] text-[14px] leading-[20px] text-[#9dc7f1]">${t}</span>`).join('')}</div>
  </li>`
).join('');

/* Taskbar icons */
const svg = (body, label) => `<svg class="h-[30px] w-[30px]" viewBox="0 0 30 30" role="img" aria-label="${label}">${body}</svg>`;
const chrome = '<circle cx="15" cy="15" r="14" fill="#4caf50"/><path fill="#ea4335" d="M15 15L2.900 8A14 14 0 0 1 27.100 8z"/><path fill="#fbc116" d="M15 15l12.100-7A14 14 0 0 1 15 29z"/><circle cx="15" cy="15" r="6.500" fill="#fff"/><circle cx="15" cy="15" r="5" fill="#4285f4"/>';
const computer = '<path fill="#c9c9c9" stroke="#111" d="M4 15h14v10H4zM2 26h17v3H2z"/><path fill="#0a12d6" d="M6 17h10v6H6z"/>';
document.getElementById('start').innerHTML = [
  ['Start', '<path fill="#fff" d="M5 7l8-1.200v8.700H5zM14 5.700L25 4v10.500H14zM5 15.500h8v8.700L5 23zM14 15.500h11V26l-11-1.700z"/>'],
  ['Cortana', '<circle cx="15" cy="15" r="8.500" fill="none" stroke="#fff" stroke-width="2.600"/>'],
  ['Task View', '<path d="M6 9h12v11H6zM6 7V5M18 7V5M6 25v-3M18 25v-3M6 25h12M23 6v18" fill="none" stroke="#fff" stroke-width="1.400"/><path fill="#fff" d="M21.500 11h3v3.500h-3z"/>']
].map(([l, b]) => `<button class="flex w-[60px] items-center justify-center">${svg(b, l)}</button>`).join('');

/* label, drawing, running state: 0 closed, 1 one window, 2 several windows, 3 focused */
const apps = [
  ['File Explorer', '<path fill="#e8a317" d="M1 4h11l2 3h14v8H1z"/><path fill="#fbd06b" d="M1 9h28v16H1z"/><path fill="#3f96dd" d="M6 28v-8q0-3 3-3h12q3 0 3 3v8h-4v-5H10v5z"/>', 2],
  ['Notion', '<path fill="#fff" stroke="#111" stroke-width="1.500" d="M2 3l20-1.500 5 4V28L7 29l-5-5z"/><path fill="none" stroke="#111" stroke-width="1.500" d="M2 3l5 4 20-1.500M7 7v22"/><text x="10.500" y="24" font-family="Liberation Serif" font-weight="bold" font-size="18" fill="#111">N</text>', 0],
  ['Remote Desktop', '<path fill="#2f62d0" stroke="#b9c7dd" stroke-width="1.500" d="M2 3l20-2 3 17-20 3z"/><path fill="#7fa6ee" d="M4 5l17-2-9 9-7 2z"/><path fill="#c9d2dc" d="M9 21h8l3 6H6z"/><circle cx="22" cy="22" r="7" fill="#dfe3df"/><path d="M19 19l3 3-3 3M25.500 18l-3 3 3 3" fill="none" stroke="#4a9a3a" stroke-width="1.500"/>', 0],
  ['VNC', '<path fill="#fff" d="M1 1h28v28H1z"/><ellipse cx="20" cy="7" rx="6" ry="3.500" fill="#1a28b0"/><circle cx="20" cy="7" r="1.500"/><path d="M4 4l6 6M10 4l-6 6" stroke="#8a1a1a" stroke-width="2"/><text x="1" y="24" font-family="Liberation Serif" font-weight="bold" font-size="14" fill="#000">Vnc</text><path fill="#e01010" d="M12 25.500h15v2H12z"/>', 0],
  ['PuTTY', '<path fill="#c9c9c9" stroke="#111" d="M14 1h13v10H14zM14 12h14v2H14zM2 16h12v9H2zM1 26h15v3H1z"/><path fill="#0a12d6" d="M16 3h9v6h-9zM4 18h8v5H4z"/><path fill="#ffeb2a" stroke="#222" stroke-width=".500" d="M20 9l-9 7h4l-5 5 9-6h-4z"/>', 2],
  ['Chrome', chrome, 0],
  ['Cloud', '<path fill="#fff" stroke="#1e9be8" stroke-width="3" d="M8 24.500a6.500 6.500 0 0 1-1-12.500 8.500 8.500 0 0 1 16 0 6.500 6.500 0 0 1-1 12.500z"/><path fill="#333" stroke="#fff" stroke-width="2.500" d="M10 28v-7a5 5 0 0 1 10 0v7"/>', 2],
  ['Notepad++', '<path fill="#f3f3ea" d="M2 3h22v25H2z"/><path fill="#7fce2a" d="M3 14q10-8 19 0v13H3z"/><circle cx="12" cy="16" r="4.500" fill="#1b7b1b"/><circle cx="10" cy="15" r="1.500" fill="#fff"/><path d="M28 3l-6 18" stroke="#e89a2a" stroke-width="2.500"/><path d="M4 4h18" stroke="#777" stroke-dasharray="1 1"/>', 1],
  ['Servers', '<path fill="#2c4fb0" d="M2 2h12v5H2z"/><path fill="#dfe6f2" stroke="#7d8cb5" d="M2 6h13v20l-13-2zM13 4h9v16h-9z"/><path d="M4 10h9M4 14h9M4 18h9M15 8h5" stroke="#4866a8" stroke-width="1.500"/><path fill="#2a9ddb" d="M14 14h12v9H14z"/><path fill="#d13328" d="M13 23h15l-3 5h-9z"/>', 0],
  ['Network', '<path fill="#0b84d0" d="M0 0h30v30H0z"/><path d="M4 20h16a6 6 0 0 0 6-6 8 8 0 0 0-15-3l-2 9M4 20v5h20v-5M12 12l8 7M16 7l3 12M22 8l-6 11" fill="none" stroke="#8fd0f5" stroke-width="1.300"/>', 0],
  ['Firefox', '<circle cx="15" cy="16" r="13" fill="#ff7a1a"/><path fill="#ffca28" d="M17 1q2 4 6 6 7 5 4 14-3 5-5 6 3-10-3-15-5-3-2-11z"/><path fill="#ff3d57" d="M3 11q-2 10 5 15 8 5 15-1-10 2-14-5-3-5 0-9-3-1-6 0z"/><circle cx="15.500" cy="16" r="5.500" fill="#7542c9"/><path fill="#ff9a2a" d="M8 10q5-1 8 2l-4 2q-3 0-4-4z"/>', 0],
  ['Zalo', '<rect x="0" y="1" width="29" height="28" rx="10" fill="#fff"/><path fill="#0a6cff" d="M2 5q-2 10 0 20l5 4-6-1q-2-12 1-23z"/><text x="4" y="19" font-family="Open Sans" font-weight="bold" font-size="10.500" fill="#0a68ff">Zalo</text>', 1],
  ['Skype', '<circle cx="12" cy="12" r="10.500" fill="#1fb6f0"/><circle cx="18" cy="18" r="10.500" fill="#0a88d8"/><circle cx="15" cy="15" r="11" fill="#129fe4"/><text x="9.500" y="22" font-family="Open Sans" font-weight="bold" font-size="19" fill="#fff">S</text>', 1],
  ['Viber', '<path fill="#7360f2" stroke="#fff" stroke-width="1.500" d="M15 1.500q13 0 13 12t-11 12l-4 4v-4q-11-1-11-12t13-12z"/><path fill="#fff" d="M9 7l3 4-1 3q2 4 5 5l2-2 4 3q-1 3-3 3Q8 19 7 9z"/><path d="M16 7q6 1 6 7M16 10.500q3 .5 3 3.500" fill="none" stroke="#fff" stroke-width="1.200"/>', 1],
  ['VMware', '<rect x="9" y="2" width="18" height="20" rx="2" fill="#48a9c9"/><path d="M12 5.500h11.500V18" fill="none" stroke="#9fd6e8" stroke-width="2"/><rect x="4.500" y="9.500" width="15" height="15" rx="1" fill="#3f7f95" stroke="#eda021" stroke-width="4.500"/>', 2],
  ['Chrome profile', chrome + '<circle cx="21.500" cy="22" r="8" fill="#f4b414"/><path fill="#547a2c" d="M17 28v-6a4.500 4.500 0 0 1 9 0v6z"/><path fill="#d02b20" d="M19.500 30v-7a2 2 0 0 1 4 0v7z"/>', 3],
  ['Command Prompt', '<path fill="#0a0a0a" stroke="#9a9a9a" stroke-width="1.500" d="M1.500 4h27v22h-27z"/><path fill="#cfcfcf" d="M2 4h26v2.500H2z"/><path d="M5 9v3M8 9v.5M8 11.500v.5M10 9l2 3M13 12.500h3" stroke="#eee" fill="none"/>', 1],
  ['Foxit PDF', '<path fill="#f58a1f" d="M0 0h23l7 7v23H0z"/><path fill="#5a3b1a" d="M23 0v7h7z"/><path d="M19 6q-10-1-10 7 1 6 6 6 5-1 5-6h-5" fill="none" stroke="#fff" stroke-width="3"/><text x="7" y="28" font-family="Open Sans" font-weight="bold" font-size="8" fill="#fff">PDF</text>', 1],
  ['Word', '<path fill="#41a5ee" d="M8 2h21v7H8z"/><path fill="#2b7cd3" d="M8 9h21v7H8z"/><path fill="#185abd" d="M8 16h21v6H8z"/><path fill="#103f91" d="M8 22h21v6H8z"/><path fill="#1a57b5" d="M0 7h16v16H0z"/><text x="2" y="19.500" font-family="Open Sans" font-weight="bold" font-size="12" fill="#fff">W</text>', 2],
  ['WinSCP', computer + '<path fill="#d6d6d6" stroke="#111" d="M13 2l4-2h10v24l-4 3h-4V15h-5z"/><path d="M15 5h7M15 8h7" stroke="#111"/>', 2],
  ['MobaXterm', '<rect x="1" y="1" width="28" height="28" rx="4" fill="#5b5b5b" stroke="#b5b5b5" stroke-width="1.600"/><path d="M8 7l14 7" stroke="#e8402a" stroke-width="4"/><path d="M22 13L8 21" stroke="#2ab3e8" stroke-width="4"/><path d="M7 22h16" stroke="#f4c41a" stroke-width="4"/>', 1],
  ['Photos', '<rect x="1" y="2" width="28" height="24" fill="#3f8fd0"/><path fill="#dff0fa" d="M4 4h22v19H4z"/><path fill="#6fb5e0" d="M4 6h22v8H4z"/><path fill="#3f8a4c" d="M4 15q8-3 14 1l8 1v6H4z"/>', 2],
  ['VLC', '<path fill="#f58a1a" d="M5 23h20l3 6H2z"/><path fill="#f58a1a" d="M13 1h4l7 24q-9 4-18 0z"/><path fill="#f1f1f1" d="M11.300 8h7.400l1.700 5.500H9.600zM8.400 18h13.200l1.400 4.500q-8 2.500-16 0z"/>', 1]
];
const bars = [
  '',
  '<span class="absolute bottom-0 left-[5px] h-[3px] w-[43px] bg-[#76b9ed]"></span>',
  '<span class="absolute bottom-0 left-[5px] h-[3px] w-[43px] border-r-[11px] border-[#5a8cb4] bg-[#76b9ed]"></span>',
  '<span class="absolute bottom-0 left-0 h-[3px] w-full bg-[#76b9ed]"></span>'
];
document.getElementById('apps').innerHTML = apps.map(([l, b, s]) =>
  `<button class="relative flex w-[53px] items-center justify-center ${s === 3 ? 'bg-white/20' : ''}">${svg(b, l)}${bars[s]}</button>`).join('');

document.getElementById('tray').innerHTML = [
  ['Show hidden icons', '<path d="M2 13l8-8 8 8" fill="none" stroke="#fff" stroke-width="1.500"/>'],
  ['Network', '<path d="M8 4h11v9H8M12 13v4M8 17.500h9M3 9V6a2 2 0 0 1 4 0v3" fill="none" stroke="#fff" stroke-width="1.500"/><path fill="#fff" d="M1 7h7v6H1z"/>'],
  ['Cloud', '<circle cx="10" cy="10" r="9.500" fill="#3ab0e8"/><path fill="#fff" d="M4 14.500q-3-1-2-4 .5-2 2.500-2.500Q6 4 10 4t5.500 4q2 .5 2.500 2.500 1 3-2 4z"/><text x="5.500" y="13" font-family="Open Sans" font-weight="bold" font-size="7.500" fill="#167">24</text>'],
  ['V', '<path fill="#fff" d="M0 0h20v20H0z"/><path d="M1 5l18 3M1 9h18M2 13l14-4" stroke="#d22"/><path d="M4 2l6 14 5-14" fill="none" stroke="#111" stroke-width="3"/><path fill="#1c8a2a" d="M13 15h7v5h-7z"/>'],
  ['Security', '<path fill="#fff" d="M9 0l8 3v6q0 6-8 10-8-4-8-10V3z"/><path d="M9 1v17M1 8.500h16" stroke="#2a3425" stroke-width="1.500"/><circle cx="14.500" cy="14.500" r="5.500" fill="#1f9d4d"/><path d="M12 14.500l2 2 3-3.500" fill="none" stroke="#fff" stroke-width="1.300"/>'],
  ['Battery', '<path d="M6 6h11.500v8H6z" fill="#fff"/><path d="M18 8.500h2v3h-2zM1 3v4M4 3v4M0 6h5l-2 4h-1zM2.500 10v4H5" stroke="#fff" fill="none" stroke-width="1.300"/>'],
  ['Wi-Fi', '<path d="M2 17A15 15 0 0 1 17 3M6 18A11 11 0 0 1 17 7.500M10 18a7 7 0 0 1 7-6" fill="none" stroke="#ddd" stroke-width="1.400"/><circle cx="15.500" cy="16.500" r="1.800" fill="#fff"/>'],
  ['Volume', '<path d="M1 7.500h3l4-4v13l-4-4H1zM11 7q2 3 0 6M14 5q3.500 5 0 10M17 3q4.500 7 0 14" fill="none" stroke="#fff" stroke-width="1.200"/>'],
  ['Unikey', '<path fill="#b9cdf3" d="M0 0h20v20H0z"/><path d="M15 4H9q-4 0-4 6t4 6h6M5 10h9" fill="none" stroke="#3a4fa0" stroke-width="2"/>']
].map(([l, b]) => `<button class="flex w-[30px] justify-center"><svg class="h-[20px] w-[20px]" viewBox="0 0 20 20" role="img" aria-label="${l}">${b}</svg></button>`).join('') +
'<button class="flex w-[40px] justify-center" aria-label="Pen"><svg class="h-[22px] w-[22px]" viewBox="0 0 22 22"><path d="M14 2l3 2-8 13-3 1 0-3.500zM9 9q-6 1-8 5-1 4 3 4 5 0 6-5M13 9l7-4q2 2 0 3h-5" fill="none" stroke="#eee" stroke-width="1.400"/></svg></button>';
</script>
</body>
</html>
